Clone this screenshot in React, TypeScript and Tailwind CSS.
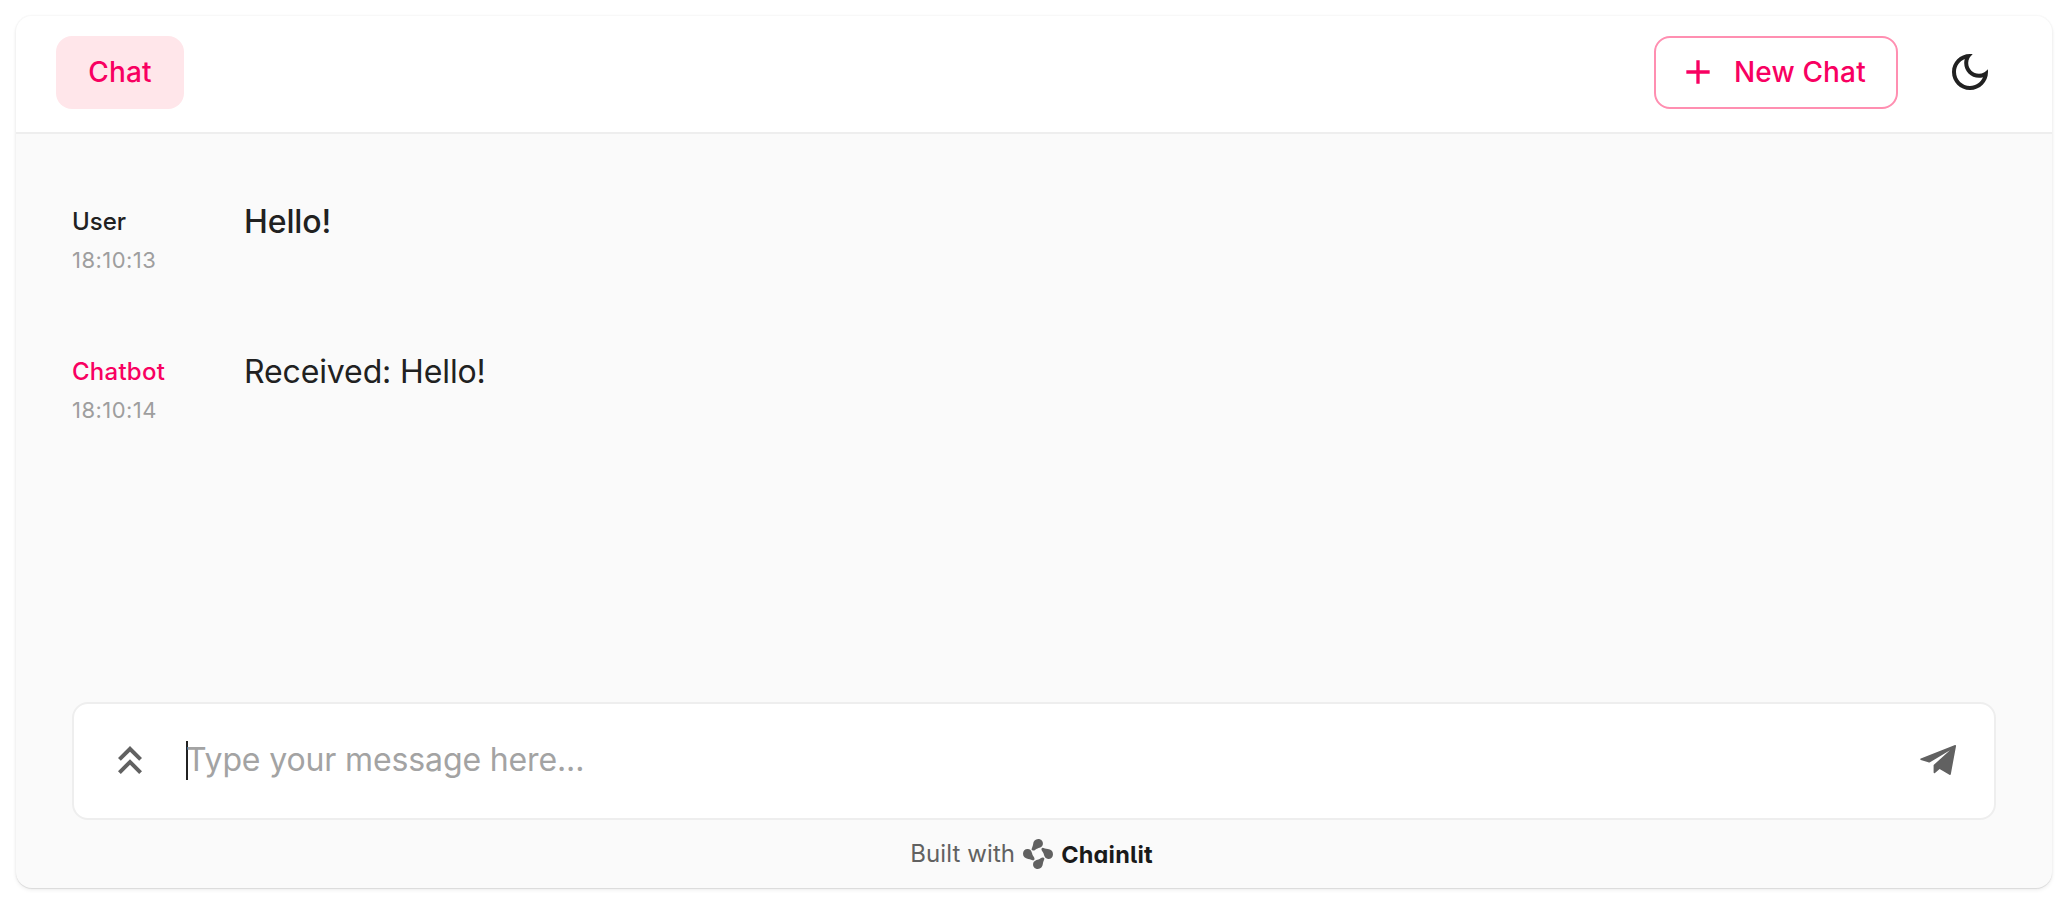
import React, { useState } from "react";

const PlusIcon = () => (
  <svg viewBox="0 0 24 24" className="size-10" fill="currentColor">
    <path d="M19 13h-6v6h-2v-6H5v-2h6V5h2v6h6v2z" />
  </svg>
);

const MoonIcon = () => (
  <svg viewBox="0 0 24 24" className="size-12" fill="currentColor">
    <path d="M9.37 5.51c-.18.64-.27 1.31-.27 1.99 0 4.08 3.32 7.4 7.4 7.4.68 0 1.35-.09 1.99-.27C17.45 17.19 14.93 19 12 19c-3.86 0-7-3.14-7-7 0-2.93 1.81-5.45 4.37-6.49zM12 3c-4.97 0-9 4.03-9 9s4.03 9 9 9 9-4.03 9-9c0-.46-.04-.92-.1-1.36-.98 1.37-2.58 2.26-4.4 2.26-2.98 0-5.4-2.42-5.4-5.4 0-1.81.89-3.42 2.26-4.4-.44-.06-.9-.1-1.36-.1z" />
  </svg>
);

const DoubleUpIcon = () => (
  <svg viewBox="0 0 24 24" className="size-12" fill="currentColor">
    <path d="M6 17.59 7.41 19 12 14.42 16.59 19 18 17.59l-6-6z" />
    <path d="m6 11 1.41 1.41L12 7.83l4.59 4.58L18 11l-6-6z" />
  </svg>
);

const PlaneIcon = () => (
  <svg viewBox="0 0 36 30" className="h-[30px] w-9" fill="currentColor">
    <path d="M35 0.1Q36.2 -0.1 36 1.2L30.8 29.2Q30.5 30.3 29.4 29.7L19.6 23.9L15 28Q13.7 29 13.6 27.3V20L30 5.2L10 17.2Q9.2 17.7 8.3 17.3L0.8 14.9Q-0.4 14.3 0.8 13.6Z" />
  </svg>
);

const ChainlitMark = () => (
  <svg viewBox="0 0 30 30" className="size-[30px]" fill="currentColor">
    {[0, 90, 180, 270].map((angle) => (
      <path
        key={angle}
        transform={`rotate(${angle} 15 15)`}
        d="M15.2 0C18.2 0 20.2 2.3 19.9 5C19.6 8 17.2 8.6 14.6 9.4C12.4 10.2 11.4 12.2 9.3 11.3C7.6 10.5 9.8 8.2 10.1 5.2C10.4 2.2 12.2 0 15.2 0Z"
      />
    ))}
  </svg>
);

type MessageProps = { author: string; time: string; text: string; own?: boolean };

const Message = ({ author, time, text, own }: MessageProps) => (
  <div className="flex h-[150px]">
    <div className="w-[172px] shrink-0">
      <div className={`text-2xl leading-9 font-medium ${own ? "text-[#212121]" : "tracking-[0.25px] text-[#f80061]"}`}>{author}</div>
      <div className="mt-0.5 text-[22px] leading-9 tracking-[0.45px] text-[#9e9e9e]">{time}</div>
    </div>
    <div className={`text-[32px] leading-9 tracking-[-0.12px] text-[#212121] ${own ? "font-medium" : ""}`}>{text}</div>
  </div>
);

export default function App() {
  const [message, setMessage] = useState("");
  return (
    <div className="h-[904px] bg-white p-4 font-['Inter',sans-serif]">
      <div className="flex h-[872px] w-[2036px] flex-col overflow-hidden rounded-2xl bg-[#fafafa] shadow-[0_1px_0_rgba(0,0,0,0.07),0_2px_4px_rgba(0,0,0,0.07),0_0_0_1.5px_rgba(0,0,0,0.02)]">
        <header className="flex h-[118px] shrink-0 items-start justify-between border-b-2 border-[#eeeeee] bg-white pt-5 pr-[58px] pl-10">
          <button className="h-[73px] w-32 rounded-2xl bg-[#ffe6ea] pb-px text-[28px] font-medium tracking-[0.2px] text-[#f80061]">Chat</button>
          <div className="flex items-center">
            <button className="flex h-[73px] w-[244px] items-center rounded-2xl border-2 border-[#ff8fb1] pb-px pl-[22px] text-[28px] font-medium tracking-[0.15px] text-[#f80061]">
              <PlusIcon />
              <span className="ml-4">New Chat</span>
            </button>
            <button className="ml-12 pb-px text-[#212121]"><MoonIcon /></button>
          </div>
        </header>
        <main className="flex-1 px-14 pt-[70px]">
          <Message author="User" time="18:10:13" text="Hello!" own />
          <Message author="Chatbot" time="18:10:14" text="Received: Hello!" />
        </main>
        <footer className="shrink-0 px-14">
          <div className="flex h-[118px] items-center rounded-2xl border-2 border-[#eeeeee] bg-white pr-[38px] pb-0.5 pl-8 text-[#616161]">
            <DoubleUpIcon />
            <div className="ml-8 h-[39px] w-0.5 bg-[#212121]" />
            <input
              value={message}
              onChange={(e) => setMessage(e.target.value)}
              placeholder="Type your message here..."
              className="-ml-0.5 flex-1 text-[32px] tracking-[-0.13px] text-[#212121] outline-none placeholder:text-[#a3a3a3]"
            />
            <PlaneIcon />
          </div>
          <div className="flex h-[68px] items-center justify-center pr-[5px] text-2xl text-[#616161]">
            <span className="tracking-[0.1px]">Built with</span>
            <span className="ml-2"><ChainlitMark /></span>
            <span className="ml-2 pt-0.5 text-[23.5px] font-bold tracking-[0.2px] text-[#1a1a1a] [font-feature-settings:'cv11','cv05']">Chainlit</span>
          </div>
        </footer>
      </div>
    </div>
  );
}
